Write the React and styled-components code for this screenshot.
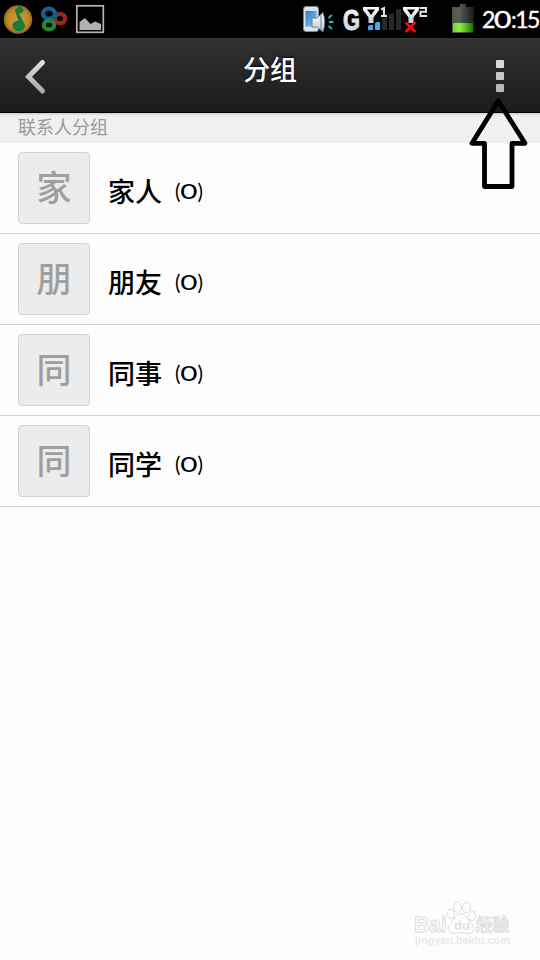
import React from 'react'
import styled, { createGlobalStyle } from 'styled-components'

const GlobalStyle = createGlobalStyle`
  * {
    box-sizing: border-box;
  }
  body {
    margin: 0;
    background: #fdfdfd;
    font-family: Lato, 'Noto Sans CJK SC', sans-serif;
  }
`

const Screen = styled.div`
  position: relative;
  display: flex;
  flex-direction: column;
  width: 540px;
  height: 960px;
  overflow: hidden;
  background: #fdfdfd;
`

const StatusBar = styled.div`
  display: flex;
  flex: none;
  justify-content: space-between;
  height: 38px;
  background: #000;
`

const StatusRight = styled.div`
  display: flex;
`

const Clock = styled.div`
  width: 66px;
  padding-left: 8px;
  color: #fff;
  font-size: 23px;
  letter-spacing: -1.6px;
  line-height: 38px;
  white-space: nowrap;
  -webkit-text-stroke: 0.4px #fff;
`

// digits are drawn with a perfectly round zero
const RoundZero = styled.span`
  display: inline-block;
  margin: 0 ${props => props.$gap}px;
  letter-spacing: 0;
  transform: scaleX(${props => props.$stretch});
`

const TitleBar = styled.header`
  display: grid;
  flex: none;
  grid-template-columns: 80px 1fr 80px;
  height: 75px;
  border-top: 1px solid #383838;
  border-bottom: 1px solid #000;
  background: linear-gradient(#313131, #1b1b1b);
`

const BarButton = styled.button`
  display: flex;
  padding: 0;
  border: 0;
  background: none;
`

const Title = styled.h1`
  margin: 0;
  padding-top: 10px;
  color: #fff;
  font-size: 27px;
  font-weight: 500;
  line-height: 41px;
  text-align: center;
  text-shadow: 0 -1px 2px #000;
`

const SectionLabel = styled.h2`
  flex: none;
  height: 30px;
  margin: 0;
  padding-left: 18px;
  background: linear-gradient(#c9c9c9, #e9e9e9 2px, #f0f0f0 4px);
  color: #999;
  font-size: 18px;
  font-weight: 400;
  line-height: 28px;
`

const GroupList = styled.ul`
  margin: 0;
  padding: 0;
  list-style: none;
`

const GroupRow = styled.li`
  display: flex;
  align-items: center;
  height: 91px;
  padding-left: 18px;
  border-bottom: 1px solid #d6d6d6;
`

const Avatar = styled.div`
  width: 72px;
  height: 72px;
  margin-right: 18px;
  border: 1px solid #d2d2d2;
  border-radius: 4px;
  background: #ececec;
  color: #9f9f9f;
  font-size: 35px;
  font-weight: 500;
  line-height: 68px;
  text-align: center;
`

const Name = styled.span`
  width: 67px;
  padding-top: 7px;
  color: #000;
  font-size: 27px;
  font-weight: 500;
  line-height: 40px;
`

const Count = styled.span`
  padding-top: 5px;
  color: #000;
  font-size: 20.5px;
  line-height: 30px;
`

const Pointer = styled.svg`
  position: absolute;
  top: 96px;
  left: 466px;
`

const Watermark = styled.svg`
  position: absolute;
  right: 22px;
  bottom: 8px;
`

const groups = [
  { initial: '家', name: '家人', count: 0 },
  { initial: '朋', name: '朋友', count: 0 },
  { initial: '同', name: '同事', count: 0 },
  { initial: '同', name: '同学', count: 0 },
]

const AppIcons = () => (
  <svg width="110" height="38">
    <defs>
      <radialGradient id="coin">
        <stop offset="0" stopColor="#d4a03a" />
        <stop offset="0.75" stopColor="#bd8829" />
        <stop offset="1" stopColor="#8d651d" />
      </radialGradient>
    </defs>
    <circle cx="18" cy="19.5" r="14.3" fill="url(#coin)" />
    <path
      d="M15 9.5 21.5 4.5Q21 8 24 10L21.5 13.5Q19.5 13.5 18.5 12.3L24 23A6.3 5.3 0 1 1 18.2 20.6L15 10.5Z"
      fill="#177c3a"
    />
    <g fill="none" strokeWidth="4.2">
      <ellipse cx="60" cy="18.5" rx="5.2" ry="4.7" stroke="#9f2227" />
      <ellipse cx="49" cy="13.7" rx="6" ry="5" stroke="#155f91" />
      <ellipse cx="49" cy="25" rx="5.2" ry="4.4" stroke="#278632" />
      <path d="M51 18.7Q54.5 17.5 55 14" stroke="#155f91" />
    </g>
    <rect x="76.8" y="5.8" width="26.5" height="26.5" fill="none" stroke="#b4b4b4" strokeWidth="1.7" />
    <path d="M79.5 30V22L85 18 90.5 24 95 21.5 101 24V30Z" fill="#b0b0b0" />
  </svg>
)

const antenna = 'M0 0H16V3L10.5 10.5V16H5.5V10.5L0 3ZM4 2.5 8 8 12 2.5Z'

const PhoneIcons = () => (
  <svg width="174" height="38" viewBox="300 0 174 38">
    <defs>
      <linearGradient id="screen" x2="1" y2="1">
        <stop offset="0" stopColor="#3477c0" />
        <stop offset="1" stopColor="#8bc8f2" />
      </linearGradient>
      <linearGradient id="silver" x2="0" y2="1">
        <stop offset="0" stopColor="#fff" />
        <stop offset="1" stopColor="#bdcedb" />
      </linearGradient>
      <linearGradient id="cell">
        <stop offset="0" stopColor="#4d554b" />
        <stop offset="0.3" stopColor="#5b6156" />
        <stop offset="1" stopColor="#161b14" />
      </linearGradient>
      <linearGradient id="charge">
        <stop offset="0" stopColor="#72d52c" />
        <stop offset="0.35" stopColor="#8df142" />
        <stop offset="1" stopColor="#187500" />
      </linearGradient>
    </defs>
    <rect x="303.5" y="6.5" width="15" height="25" rx="2.5" fill="#d8e3ec" stroke="#728ba1" />
    <rect x="305.5" y="11" width="11" height="15.5" fill="url(#screen)" />
    <path d="M312 18H317L323 12.5Q326.5 21.5 323 32L317 27H312Z" fill="url(#silver)" stroke="#53687b" strokeWidth="0.8" />
    <path d="M321 14V30" stroke="#6f8290" />
    <path d="M328.5 18 332 15M329 22H333.5M328.5 26 332 29" stroke="#28b1d7" strokeWidth="1.8" />
    <text
      x="343"
      y="29.5"
      fontFamily="Liberation Sans"
      fontSize="29"
      fontWeight="700"
      textLength="17"
      lengthAdjust="spacingAndGlyphs"
      fill="url(#silver)"
      stroke="#e1eaf0"
      strokeWidth="0.9"
    >
      G
    </text>
    <path transform="translate(363 7)" d={antenna} fill="url(#silver)" fillRule="evenodd" />
    <path transform="translate(403 7)" d={antenna} fill="url(#silver)" fillRule="evenodd" />
    <path d="M381 9.5 384 8V16M381 16H387" fill="none" stroke="#d7e4ee" strokeWidth="2" />
    <path d="M419.5 8H426V11.8H420.5V16H427" fill="none" stroke="#d7e4ee" strokeWidth="2" />
    <path d="M368 27Q368 25 370 25H373V30H368ZM375 24Q375 22 377 22H380V30H375Z" fill="#2bb1f4" />
    <path d="M382 18.5 384 17.5H387V30H382ZM389 14.5 391 13.5H394V30H389ZM396 10 398 9H401V30H396Z" fill="#292929" />
    <path d="M405.5 22.5 415.5 32M415.5 22 405.5 32" stroke="#f20c0c" strokeWidth="2.8" />
    <path d="M452 7H460V4H466V7H474V33H452Z" fill="url(#cell)" />
    <path d="M453 23H473V32H453Z" fill="url(#charge)" />
  </svg>
)

const BackIcon = () => (
  <svg width="60" height="73">
    <defs>
      <linearGradient id="back" x2="0" y2="1">
        <stop offset="0" stopColor="#dedede" />
        <stop offset="1" stopColor="#aaa" />
      </linearGradient>
    </defs>
    <path d="M42.5 23.5 28.5 37.8 42.5 52" fill="none" stroke="url(#back)" strokeWidth="5" strokeLinecap="round" />
  </svg>
)

const MoreIcon = () => (
  <svg width="80" height="73">
    <rect x="36" y="21" width="8" height="8" rx="0.7" fill="#d8d8d8" />
    <rect x="36" y="33" width="8" height="8" rx="0.7" fill="#c8c8c8" />
    <rect x="36" y="45" width="8" height="8" rx="0.7" fill="#b9b9b9" />
  </svg>
)

const BaiduMark = () => (
  <Watermark width="104" height="54" viewBox="0 0 104 54">
    <g fill="#fdfdfd" stroke="#dedede" strokeWidth="1">
      <text x="0" y="33.5" fontFamily="Liberation Sans" fontSize="22" fontWeight="700" textLength="33" lengthAdjust="spacingAndGlyphs">
        Bai
      </text>
      <ellipse cx="37" cy="16" rx="3.6" ry="4.6" transform="rotate(-12 37 16)" />
      <ellipse cx="43.5" cy="9" rx="4" ry="5.2" />
      <ellipse cx="52.5" cy="9.5" rx="4" ry="5.2" transform="rotate(12 52.5 9.5)" />
      <ellipse cx="58" cy="18" rx="3.6" ry="4.6" transform="rotate(12 58 18)" />
      <path d="M47 16C41 16 41 21 37 25C32 29 34 36 40 35.5Q47 33.5 54 35.5C60 36 62 29 57 25C52 21 53 16 47 16Z" />
    </g>
    <text x="40" y="32" fontFamily="Liberation Sans" fontSize="13" fontWeight="700" fill="#dfdfdf">
      du
    </text>
    <text x="62" y="33" fontFamily="Noto Sans CJK SC" fontSize="16.5" fontWeight="700" fill="#fdfdfd" stroke="#dadada" strokeWidth="0.9">
      经验
    </text>
    <text x="1" y="46" fontFamily="Liberation Sans" fontSize="11" fontWeight="700" textLength="95" fill="#e9e9e9">
      jingyan.baidu.com
    </text>
  </Watermark>
)

const Group = ({ group }) => (
  <GroupRow>
    <Avatar>{group.initial}</Avatar>
    <Name>{group.name}</Name>
    <Count>
      (<RoundZero $stretch={1.45} $gap={2.5}>{group.count}</RoundZero>)
    </Count>
  </GroupRow>
)

const App = () => (
  <Screen>
    <GlobalStyle />
    <StatusBar>
      <AppIcons />
      <StatusRight>
        <PhoneIcons />
        <Clock>
          2<RoundZero $stretch={1.3} $gap={2}>0</RoundZero>:15
        </Clock>
      </StatusRight>
    </StatusBar>
    <TitleBar>
      <BarButton aria-label="返回">
        <BackIcon />
      </BarButton>
      <Title>分组</Title>
      <BarButton aria-label="更多">
        <MoreIcon />
      </BarButton>
    </TitleBar>
    <SectionLabel>联系人分组</SectionLabel>
    <GroupList>
      {groups.map(group => (
        <Group key={group.name} group={group} />
      ))}
    </GroupList>
    <Pointer width="66" height="96" viewBox="466 96 66 96">
      <path
        d="M498.3 101 472 143.3H484.5V186.5H512V143.3H525Z"
        fill="none"
        stroke="#000"
        strokeWidth="4.8"
        strokeLinejoin="round"
      />
    </Pointer>
    <BaiduMark />
  </Screen>
)

export default App
